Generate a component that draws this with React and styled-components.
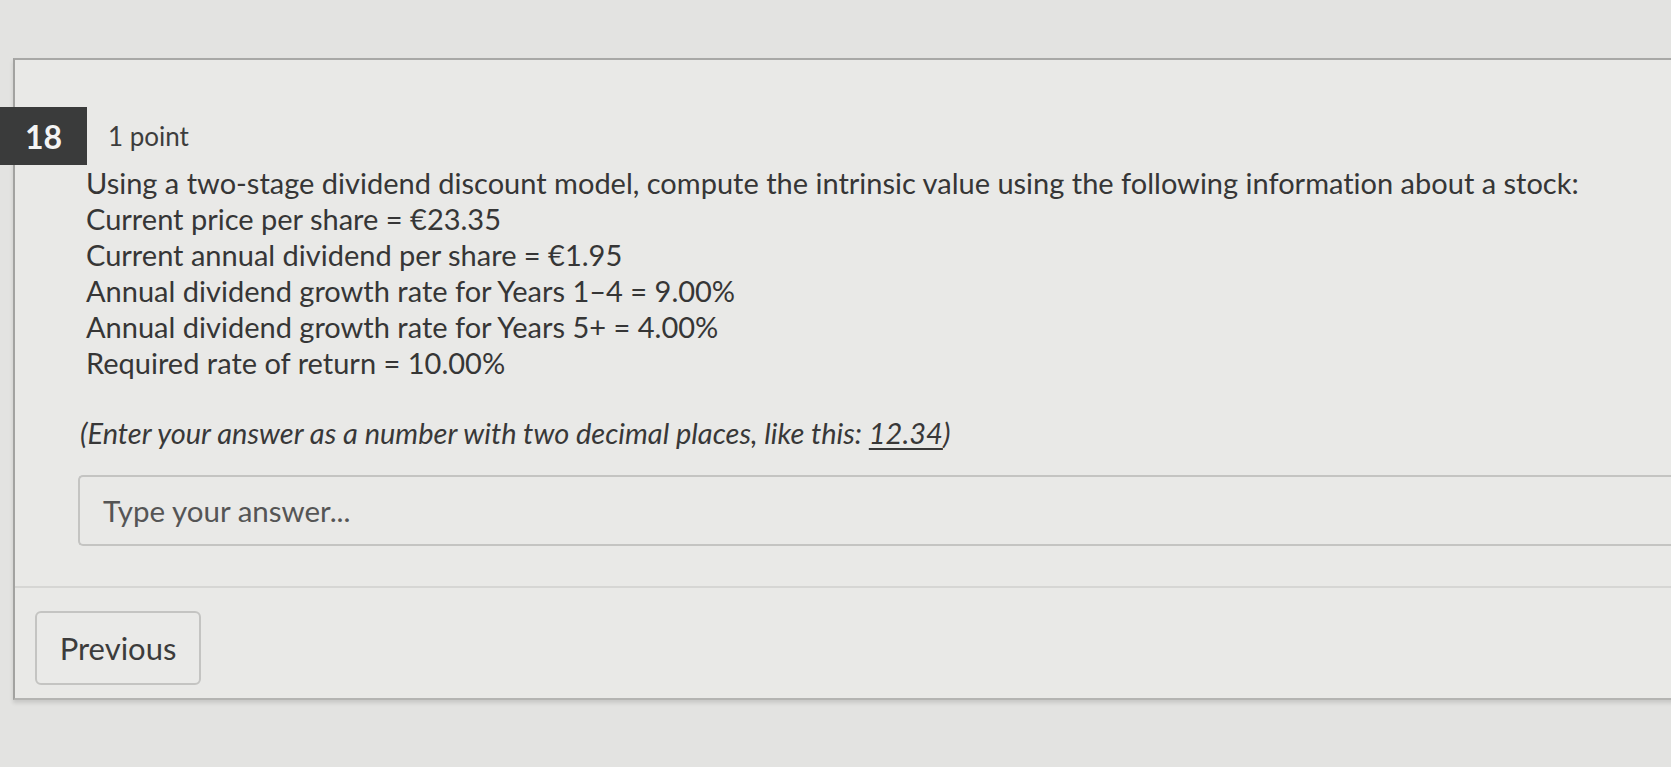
import React from "react";
import styled, { createGlobalStyle } from "styled-components";

const Global = createGlobalStyle`
  html, body { margin: 0; padding: 0; }
  body {
    background: #e3e3e1;
    font-family: Lato, "Open Sans", "Liberation Sans", sans-serif;
    font-variant-ligatures: none;
    color: #3a3a3a;
    overflow: hidden;
    width: 1671px;
    height: 767px;
  }
`;

const Page = styled.div`
  padding: 58px 0 0 13px;
  display: flex;
  flex-direction: column;
`;

const Card = styled.section`
  background: #e9e9e7;
  border-top: 2px solid #a8a8a6;
  border-left: 2px solid #a2a2a0;
  border-bottom: 2px solid #b4b4b2;
  box-shadow: 0 3px 4px rgba(0, 0, 0, 0.12);
  margin-right: -30px;
  height: 642px;
  box-sizing: border-box;
  display: flex;
  flex-direction: column;
`;

const Header = styled.div`
  display: flex;
  align-items: center;
  gap: 21px;
  margin-top: 47px;
  margin-left: -15px;
`;

const Badge = styled.div`
  width: 87px;
  height: 58px;
  background: #3a3b3b;
  color: #f4f4f4;
  font-size: 32px;
  font-weight: 700;
  display: flex;
  align-items: center;
  justify-content: center;
`;

const Points = styled.div`
  font-size: 26px;
  color: #3d3d3d;
`;

const Body = styled.div`
  padding-left: 71px;
  display: flex;
  flex-direction: column;
`;

const Question = styled.div`
  font-size: 29px;
  line-height: 36px;
  color: #363636;
`;

const Hint = styled.div`
  font-size: 29px;
  font-style: italic;
  line-height: 36px;
  margin-top: 34px;
  margin-left: -6px;
  color: #383838;
`;

const Example = styled.span`
  text-decoration: underline;
  text-underline-offset: 4px;
`;

const Answer = styled.div`
  margin-top: 24px;
  margin-left: -8px;
  height: 71px;
  box-sizing: border-box;
  border: 2px solid #c4c4c2;
  border-right: none;
  border-radius: 5px 0 0 5px;
  display: flex;
  align-items: center;
  padding-left: 23px;
  font-size: 29.5px;
  color: #555;
`;

const Divider = styled.div`
  margin-top: 40px;
  border-top: 2px solid #d6d6d4;
`;

const Footer = styled.div`
  padding: 23px 0 0 20px;
`;

const Button = styled.button`
  width: 166px;
  height: 74px;
  background: #eaeae8;
  border: 2px solid #c4c4c2;
  border-radius: 6px;
  font-family: Lato, "Open Sans", "Liberation Sans", sans-serif;
  font-size: 31px;
  color: #3c3c3c;
  cursor: pointer;
  padding: 0;
`;

const lines = [
  "Using a two-stage dividend discount model, compute the intrinsic value using the following information about a stock:",
  "Current price per share = €23.35",
  "Current annual dividend per share = €1.95",
  "Annual dividend growth rate for Years 1–4 = 9.00%",
  "Annual dividend growth rate for Years 5+ = 4.00%",
  "Required rate of return = 10.00%",
];

export default function App() {
  return (
    <>
      <Global />
      <Page>
        <Card>
          <Header>
            <Badge>18</Badge>
            <Points>1 point</Points>
          </Header>
          <Body>
            <Question>
              {lines.map((l) => (
                <div key={l}>{l}</div>
              ))}
            </Question>
            <Hint>
              (Enter your answer as a number with two decimal places, like this: <Example>12.34</Example>)
            </Hint>
            <Answer>Type your answer...</Answer>
          </Body>
          <Divider />
          <Footer>
            <Button>Previous</Button>
          </Footer>
        </Card>
      </Page>
    </>
  );
}
